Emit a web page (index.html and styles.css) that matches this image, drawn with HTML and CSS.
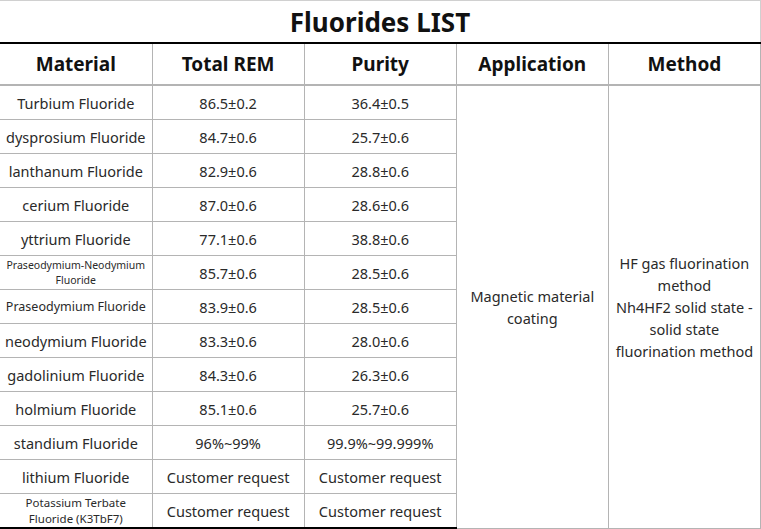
FILE: index.html
```html
<!DOCTYPE html>
<html>
<head>
<meta charset="utf-8">
<link rel="stylesheet" href="styles.css">
</head>
<body>
<table class="list">
  <colgroup>
    <col class="c"><col class="c"><col class="c"><col class="c"><col class="c">
  </colgroup>
  <thead>
    <tr class="title-row"><th colspan="5" class="title">Fluorides LIST</th></tr>
    <tr class="head-row">
      <th>Material</th><th>Total REM</th><th>Purity</th><th>Application</th><th>Method</th>
    </tr>
  </thead>
  <tbody>
    <tr><td>Turbium Fluoride</td><td>86.5±0.2</td><td>36.4±0.5</td>
      <td rowspan="13" class="span">Magnetic material<br>coating</td>
      <td rowspan="13" class="span method">HF gas fluorination method<br>Nh4HF2 solid state - solid state fluorination method</td></tr>
    <tr><td>dysprosium Fluoride</td><td>84.7±0.6</td><td>25.7±0.6</td></tr>
    <tr><td>lanthanum Fluoride</td><td>82.9±0.6</td><td>28.8±0.6</td></tr>
    <tr><td>cerium Fluoride</td><td>87.0±0.6</td><td>28.6±0.6</td></tr>
    <tr><td>yttrium Fluoride</td><td>77.1±0.6</td><td>38.8±0.6</td></tr>
    <tr><td class="xs">Praseodymium-Neodymium Fluoride</td><td>85.7±0.6</td><td>28.5±0.6</td></tr>
    <tr><td class="sm">Praseodymium Fluoride</td><td>83.9±0.6</td><td>28.5±0.6</td></tr>
    <tr><td>neodymium Fluoride</td><td>83.3±0.6</td><td>28.0±0.6</td></tr>
    <tr><td>gadolinium Fluoride</td><td>84.3±0.6</td><td>26.3±0.6</td></tr>
    <tr><td>holmium Fluoride</td><td>85.1±0.6</td><td>25.7±0.6</td></tr>
    <tr><td>standium Fluoride</td><td>96%~99%</td><td>99.9%~99.999%</td></tr>
    <tr><td>lithium Fluoride</td><td>Customer request</td><td>Customer request</td></tr>
    <tr class="last"><td class="xs2">Potassium Terbate Fluoride (K3TbF7)</td><td>Customer request</td><td>Customer request</td></tr>
  </tbody>
</table>
</body>
</html>
```

FILE: styles.css
```css
html, body {
  margin: 0;
  padding: 0;
  background: #fff;
}
body {
  font-family: "Noto Sans", "Open Sans", sans-serif;
  color: #2a2a2a;
}
.list {
  border-collapse: collapse;
  table-layout: fixed;
  width: 761px;
}
.list .c {
  width: 152px;
}
.list th, .list td {
  border: 1px solid #b4b4b4;
  text-align: center;
  vertical-align: middle;
  padding: 0 4px;
}
.title-row th {
  height: 41px;
  border-top: 1px solid #d0d0d0;
  border-left: none;
  border-right: 1px solid #d0d0d0;
  border-bottom: 2px solid #000;
  font-size: 26px;
  font-weight: 700;
  color: #111;
  line-height: 30px;
}
.head-row th {
  height: 40px;
  font-size: 19px;
  font-weight: 700;
  color: #111;
  border-bottom: 2px solid #b4b4b4;
}
.list td {
  height: 33px;
  font-size: 14.5px;
  line-height: 18px;
}
.list td.xs {
  font-size: 10.5px;
  line-height: 15px;
}
.list td.sm {
  font-size: 12.5px;
  padding: 0 1px;
  white-space: nowrap;
}
.list td.xs2 {
  font-size: 11.5px;
  line-height: 16px;
}
.list td.span {
  line-height: 22px;
}
.list td.method {
  padding: 0 2px;
}
.list tr.last td {
  height: 33px;
  border-bottom: 2px solid #000;
}
.list tr > :first-child {
  border-left: none;
}
```
